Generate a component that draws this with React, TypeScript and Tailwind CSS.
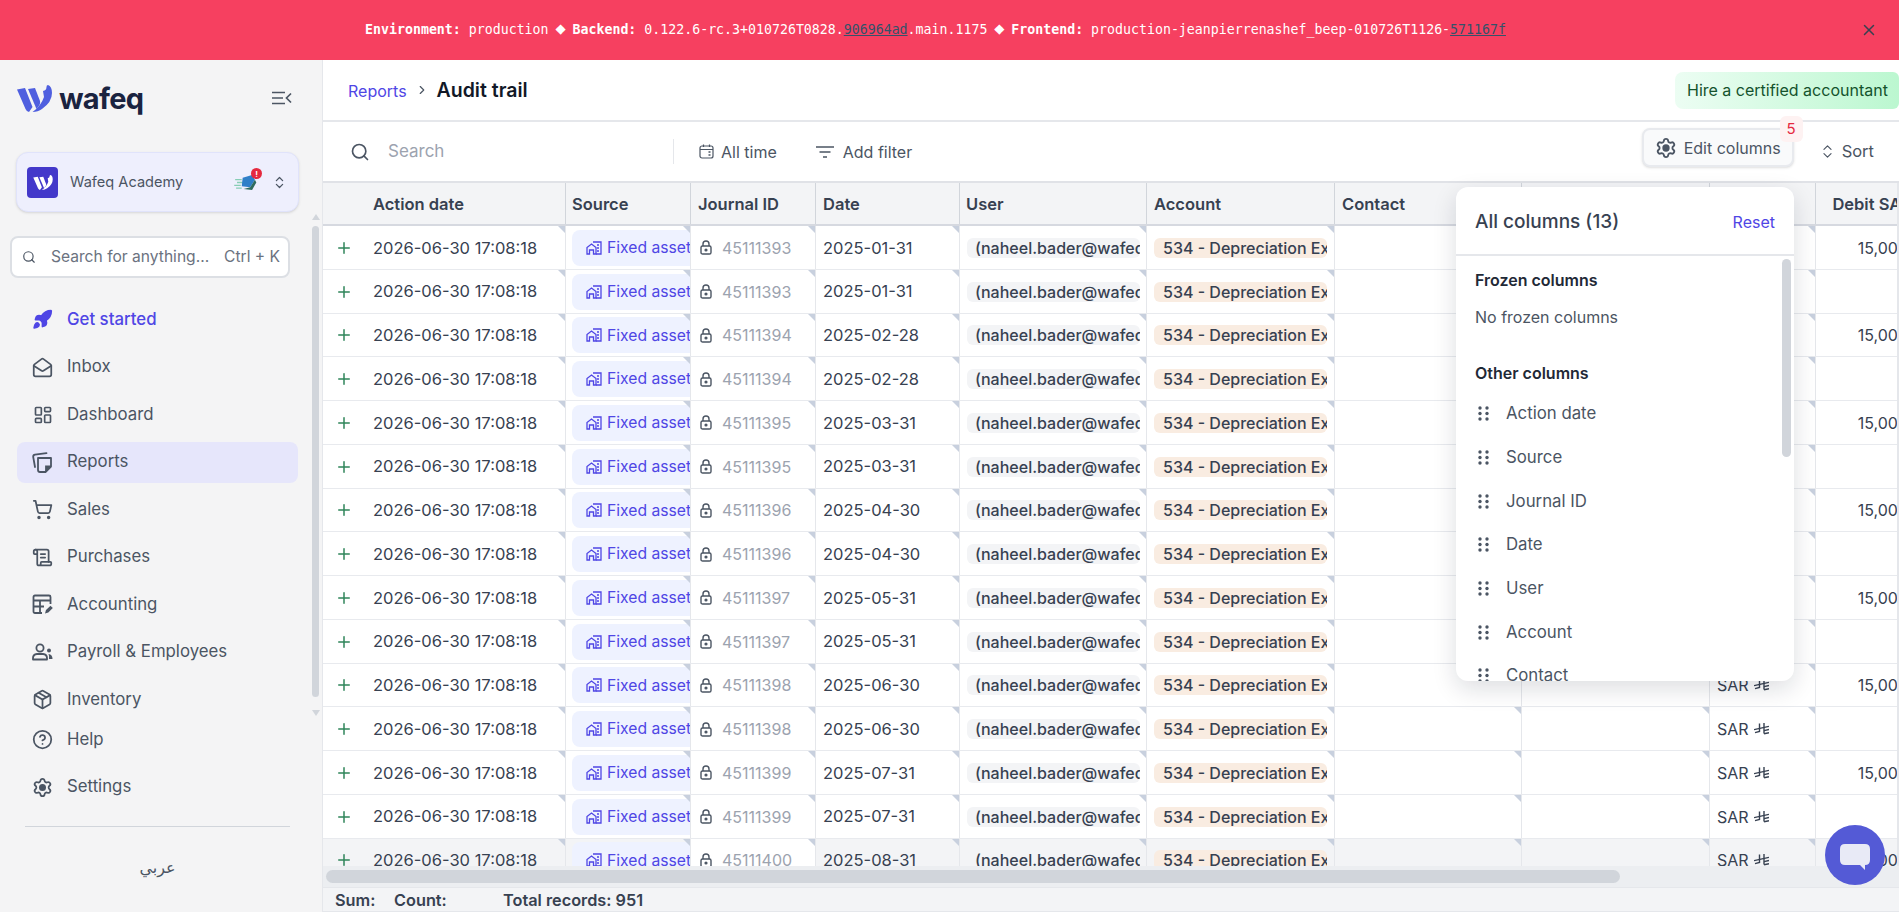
import type { ReactNode } from "react";
import {
  ChevronRight,
  ChevronsUpDown,
  CircleHelp,
  LayoutDashboard,
  MailOpen,
  Package,
  Plus,
  Rocket,
  ScrollText,
  Search,
  Settings,
  ShoppingCart,
  X,
} from "lucide-react";

// ─── Table data ───────────────────────────────────────────
const ROWS = [
  ["45111393", "2025-01-31", true],
  ["45111393", "2025-01-31", false],
  ["45111394", "2025-02-28", true],
  ["45111394", "2025-02-28", false],
  ["45111395", "2025-03-31", true],
  ["45111395", "2025-03-31", false],
  ["45111396", "2025-04-30", true],
  ["45111396", "2025-04-30", false],
  ["45111397", "2025-05-31", true],
  ["45111397", "2025-05-31", false],
  ["45111398", "2025-06-30", true],
  ["45111398", "2025-06-30", false],
  ["45111399", "2025-07-31", true],
  ["45111399", "2025-07-31", false],
  ["45111400", "2025-08-31", true],
] as const;

const PANEL_COLUMNS = ["Action date", "Source", "Journal ID", "Date", "User", "Account", "Contact"];

// ─── Small drawings ───────────────────────────────────────
function WafeqMark({ className }: { className: string }) {
  return (
    <svg viewBox="0 0 35 27" className={className} fill="currentColor">
      <path d="M0 4.5 L8 3 L15.5 22 L12 27 Q9.5 26.5 8.5 24 Z" />
      <path d="M11 4 L18 3 L23 16 Q23.5 18 22.5 20 L19.5 24 Z" />
      <path d="M26 6 Q29.5 5.5 29.5 2 Q29.5 0 31 0 Q35 1.5 35 8 Q35 17 25 24 Q21 27 15.5 27 Q24 21 27 12 Z" />
    </svg>
  );
}

function RiyalSign() {
  return (
    <svg viewBox="0 0 15 12" className="h-[12px] w-[15px]" fill="none" stroke="currentColor" strokeWidth="1.4">
      <path d="M5.5 0.5 V8.5 L1 9.6" />
      <path d="M10 0 V10.5" />
      <path d="M0 6.6 L15 3.4" />
      <path d="M10 7.6 L15 6.5" />
      <path d="M10 10.8 L15 9.7" />
    </svg>
  );
}

function AssetIcon() {
  return (
    <svg viewBox="0 0 16 14" className="h-[14px] w-[16px] shrink-0" fill="none" stroke="currentColor" strokeWidth="1.3">
      <path d="M1 13 V6.5 L5.5 3 L10 6.5 V13 H7.5 V9 H3.5 V13 Z" />
      <path d="M7 1 H15 V13 H10" />
      <path d="M11 4 H13 M11 7 H13 M11 10 H13" />
    </svg>
  );
}

function LockIcon() {
  return (
    <svg viewBox="0 0 12 15" className="h-[15px] w-[12px] shrink-0 text-[#4b5563]" fill="none" stroke="currentColor" strokeWidth="1.4">
      <rect x="1" y="6" width="10" height="8" rx="1.6" />
      <path d="M3 6 V4 a3 3 0 0 1 6 0 V6" />
      <circle cx="6" cy="10" r="0.9" fill="currentColor" />
    </svg>
  );
}

function ReportsIcon() {
  return (
    <svg viewBox="0 0 21 21" className="h-[21px] w-[21px]" fill="none" stroke="currentColor" strokeWidth="1.8">
      <path d="M6 6 H19 V14.5 L13.5 20 H8 Q6 20 6 18 Z" strokeLinejoin="round" />
      <path d="M19 14.5 H14 V20" fill="currentColor" />
      <path d="M3 15 L1.2 5 Q1 3 3 2.7 L14.5 1.2" strokeLinecap="round" />
    </svg>
  );
}

function AccountingIcon() {
  return (
    <svg viewBox="0 0 21 21" className="h-[21px] w-[21px]" fill="none" stroke="currentColor" strokeWidth="1.8">
      <path d="M10 19 H3 Q1.5 19 1.5 17.5 V3 Q1.5 1.5 3 1.5 H17 Q18.5 1.5 18.5 3 V10" />
      <path d="M1.5 6.5 H18.5 M1.5 12.5 H12 M8 6.5 V18" />
      <path d="M13 19.5 L14 16 L18.5 11.8 L20.8 14 L16.3 18.5 Z" fill="currentColor" stroke="none" />
    </svg>
  );
}

function PayrollIcon() {
  return (
    <svg viewBox="0 0 21 21" className="h-[21px] w-[21px]" fill="none" stroke="currentColor" strokeWidth="1.8">
      <circle cx="8" cy="6" r="3.6" />
      <path d="M1 17.5 V16 Q1 12.5 5 12 H11 Q15 12.5 15 16 V17.5 Z" strokeLinejoin="round" />
      <circle cx="17" cy="8.5" r="2" fill="currentColor" stroke="none" />
      <path d="M16.5 12 Q20.5 12.5 20.5 17 H17 Q17.5 14 16.5 12 Z" fill="currentColor" stroke="none" />
    </svg>
  );
}

function CalendarIcon() {
  return (
    <svg viewBox="0 0 15 15" className="h-[15px] w-[15px]" fill="none" stroke="currentColor" strokeWidth="1.2">
      <rect x="1" y="2" width="13" height="12" rx="2" />
      <path d="M1 5.5 H14 M4.5 0.5 V3 M10.5 0.5 V3" />
      <path d="M9.5 8 H11.5 M9.5 11 H11.5" strokeWidth="1.5" />
    </svg>
  );
}

function GripDots() {
  return (
    <svg viewBox="0 0 11 15" className="h-[15px] w-[11px] text-[#4b5563]" fill="currentColor">
      <circle cx="2" cy="2" r="1.7" />
      <circle cx="9" cy="2" r="1.7" />
      <circle cx="2" cy="7.5" r="1.7" />
      <circle cx="9" cy="7.5" r="1.7" />
      <circle cx="2" cy="13" r="1.7" />
      <circle cx="9" cy="13" r="1.7" />
    </svg>
  );
}

function Corner() {
  return (
    <span className="absolute right-0 top-0 h-0 w-0 border-l-[7px] border-t-[7px] border-l-transparent border-t-[#c8d0de]" />
  );
}

function Diamond() {
  return <span className="inline-flex w-[8px] justify-center text-[17px] leading-none">◆</span>;
}

// ─── Sidebar ──────────────────────────────────────────────
function NavItem({ icon, label, active, tint }: { icon: ReactNode; label: string; active?: boolean; tint?: boolean }) {
  return (
    <div
      className={`mb-[6.5px] ml-[17px] flex h-[41px] w-[281px] items-center gap-[14px] rounded-lg px-[15px] text-[16.8px] ${
        active ? "font-medium text-[#4f46e5]" : "text-[#4b5563]"
      } ${tint ? "bg-[#e6e6fb]" : ""}`}
    >
      <span className="flex w-[21px] shrink-0 justify-center">{icon}</span>
      {label}
    </div>
  );
}

function Sidebar() {
  return (
    <aside className="relative w-[323px] shrink-0 border-r border-[#e5e7eb] bg-[#f4f4f5]">
      <div className="flex h-[76px] items-center pl-[17px] pr-[30px]">
        <WafeqMark className="h-[27px] w-[35px] text-[#4f5fdf]" />
        <span className="ml-[7px] text-[29px] font-bold leading-none tracking-tight text-[#1a2340]">wafeq</span>
        <svg viewBox="0 0 20 14" className="ml-auto h-[14px] w-[20px] text-[#4b5563]" fill="none" stroke="currentColor" strokeWidth="1.7">
          <path d="M0 1.5 H13 M0 7 H11 M0 12.5 H13" />
          <path d="M19 2.5 L14.5 7 L19 11.5" />
        </svg>
      </div>

      <div className="ml-[16px] mt-[16px] flex h-[60px] w-[283px] items-center rounded-xl border border-[#e0e3fb] bg-[#eeeffd] pl-[10px] pr-[11px] shadow-sm">
        <div className="flex h-[31px] w-[31px] items-center justify-center rounded-[4px] bg-[#4338ca]">
          <WafeqMark className="h-[15px] w-[20px] text-white" />
        </div>
        <span className="ml-[12px] pt-px text-[14.6px] text-[#4b5563]">Wafeq Academy</span>
        <div className="relative ml-auto mr-[15px] h-[16px] w-[23px]">
          <svg viewBox="0 0 24 17" className="h-[16px] w-[23px]">
            <path d="M1 6 H8 M3 9 H9 M0 12 H7 M2 15 H8" stroke="#86cdb5" strokeWidth="1.4" />
            <path d="M9 4 L19 1 L22 6 L17 14 L8 13 Z" fill="#2f7fc8" />
            <path d="M17 14 L22 6 L23.5 9 L19 17 L10 16 Z" fill="#2e6b5e" />
          </svg>
          <span className="absolute -right-[5px] -top-[6px] flex h-[11px] w-[11px] items-center justify-center rounded-full bg-[#e5293f] text-[8px] font-bold leading-none text-white">
            !
          </span>
        </div>
        <ChevronsUpDown size={15} className="text-[#4b5563]" />
      </div>

      <div className="ml-[10px] mt-[24px] flex h-[42px] w-[280px] items-center rounded-lg border-2 border-[#dcdfe4] bg-white pl-[10px] pr-[8px] text-[15.6px] text-[#6b7280]">
        <Search size={14} className="text-[#4b5563]" />
        <span className="ml-[15px]">Search for anything...</span>
        <span className="ml-auto">Ctrl + K</span>
      </div>

      <nav className="mt-[21px] h-[420px]">
        <NavItem active label="Get started" icon={<Rocket size={21} fill="currentColor" />} />
        <NavItem label="Inbox" icon={<MailOpen size={21} />} />
        <NavItem label="Dashboard" icon={<LayoutDashboard size={20} />} />
        <NavItem tint label="Reports" icon={<ReportsIcon />} />
        <NavItem label="Sales" icon={<ShoppingCart size={21} />} />
        <NavItem label="Purchases" icon={<ScrollText size={21} />} />
        <NavItem label="Accounting" icon={<AccountingIcon />} />
        <NavItem label="Payroll & Employees" icon={<PayrollIcon />} />
        <NavItem label="Inventory" icon={<Package size={21} />} />
      </nav>
      <NavItem label="Help" icon={<CircleHelp size={21} />} />
      <NavItem label="Settings" icon={<Settings size={21} className="[&>circle]:fill-current" />} />

      <div className="ml-[25px] mt-[18px] h-px w-[265px] bg-[#d1d5db]" />
      <div className="mt-[29px] w-[315px] text-center text-[16px] leading-6 text-[#4b5563] [font-family:'DejaVu_Sans',sans-serif]">
        عربي
      </div>

      {/* scrollbar over the nav */}
      <span className="absolute left-[312px] top-[154px] h-0 w-0 border-x-[4px] border-b-[6px] border-x-transparent border-b-[#d1d5db]" />
      <span className="absolute left-[312px] top-[166px] h-[471px] w-[7px] rounded-full bg-[#d1d5db]" />
      <span className="absolute left-[312px] top-[650px] h-0 w-0 border-x-[4px] border-t-[6px] border-x-transparent border-t-[#d1d5db]" />
    </aside>
  );
}

// ─── Table ────────────────────────────────────────────────
function HeadCell({ className, children }: { className: string; children?: ReactNode }) {
  return (
    <div className={`flex h-full shrink-0 items-center border-r border-[#d1d5db] px-[7px] pt-[2px] ${className}`}>{children}</div>
  );
}

function Cell({ className, children }: { className: string; children?: ReactNode }) {
  return (
    <div className={`relative flex h-full shrink-0 items-center overflow-hidden border-r border-[#e5e7eb] pt-[1px] ${className}`}>
      {children}
      <Corner />
    </div>
  );
}

function Row({ id, date, debit, hovered }: { id: string; date: string; debit: boolean; hovered: boolean }) {
  return (
    <div className={`flex h-[43.75px] border-b border-[#e8eaee] text-[16px] text-[#374151] ${hovered ? "bg-[#f3f4f6]" : "bg-white"}`}>
      <Cell className="w-[243px]">
        <span className="flex w-[50px] justify-start pl-[12px] text-[#2f855a]">
          <Plus size={18} strokeWidth={2} />
        </span>
        <span className="whitespace-nowrap text-[16.5px]">2026-06-30 17:08:18</span>
      </Cell>
      <Cell className="w-[125px] pl-[6px]">
        <span className="flex h-[36px] w-[150px] shrink-0 items-center gap-[5px] rounded-lg bg-[#eef2ff] pl-[14px] text-[15.7px] text-[#4f46e5]">
          <AssetIcon />
          <span className="whitespace-nowrap">Fixed asset</span>
        </span>
      </Cell>
      <Cell className="w-[125px] gap-[10px] bg-white pl-[9px]">
        <LockIcon />
        <span className="text-[#9ca3af]">{id}</span>
      </Cell>
      <Cell className="w-[144px] pl-[7px] text-[16.5px]">{date}</Cell>
      <Cell className="w-[187px] pl-[7px] pr-[6px]">
        <span className="w-full overflow-hidden whitespace-nowrap rounded-md bg-[#f3f4f6] pl-[8px] font-medium leading-5">
          (naheel.bader@wafeq.com)
        </span>
      </Cell>
      <Cell className="w-[188px] px-[7px]">
        <span className="w-full overflow-hidden whitespace-nowrap rounded-md bg-[#f9ece1] pl-[9px] font-medium leading-5">
          534 - Depreciation Expense
        </span>
      </Cell>
      <Cell className="w-[187px]" />
      <Cell className="w-[188px]" />
      <Cell className="w-[106px] gap-[5px] pl-[7px]">
        SAR <RiyalSign />
      </Cell>
      <Cell className="w-[124px] justify-end pr-[7px]">{debit && "15,000.00"}</Cell>
    </div>
  );
}

function ColumnsPanel() {
  return (
    <div className="absolute left-[1133px] top-[4px] flex h-[494px] w-[338px] flex-col overflow-hidden rounded-xl bg-white shadow-[0_8px_24px_rgba(15,23,42,0.14)]">
      <div className="flex h-[69px] shrink-0 items-center justify-between border-b-2 border-[#e5e7eb] px-[19px] pt-[3px]">
        <span className="text-[19px] font-medium text-[#374151]">All columns (13)</span>
        <span className="text-[16px] text-[#4f46e5]">Reset</span>
      </div>
      <div className="relative pl-[19px] text-[16px]">
        <div className="mt-[13px] h-[22px] font-semibold leading-[22px] text-[#1f2937]">Frozen columns</div>
        <div className="mt-[15px] h-[22px] leading-[22px] text-[#4b5563]">No frozen columns</div>
        <div className="mt-[34px] h-[22px] font-semibold leading-[22px] text-[#1f2937]">Other columns</div>
        <div className="mt-[8px]">
          {PANEL_COLUMNS.map((name) => (
            <div key={name} className="flex h-[43.7px] items-center text-[16.8px] text-[#4b5563]">
              <span className="ml-[3px] mr-[17px] flex">
                <GripDots />
              </span>
              {name}
            </div>
          ))}
        </div>
        <span className="absolute right-[3px] top-[3px] h-[198px] w-[9px] rounded-full bg-[#d1d5db]" />
      </div>
    </div>
  );
}

function AuditTable() {
  return (
    <div className="relative min-h-0 flex-1">
      <div className="h-full overflow-hidden border-r-2 border-[#e5e7eb]">
        <div className="flex h-[43px] border-b-2 border-[#d6d9e0] bg-[#f3f4f6] text-[16.5px] font-semibold text-[#374151]">
          <HeadCell className="w-[243px] pl-[50px]">Action date</HeadCell>
          <HeadCell className="w-[125px] pl-[6px]">Source</HeadCell>
          <HeadCell className="w-[125px]">Journal ID</HeadCell>
          <HeadCell className="w-[144px]">Date</HeadCell>
          <HeadCell className="w-[187px] pl-[6px]">User</HeadCell>
          <HeadCell className="w-[188px]">Account</HeadCell>
          <HeadCell className="w-[187px]">Contact</HeadCell>
          <HeadCell className="w-[188px]" />
          <HeadCell className="w-[106px]" />
          <HeadCell className="w-[124px] justify-end gap-[5px] whitespace-nowrap">
            Debit SAR <RiyalSign />
          </HeadCell>
        </div>
        {ROWS.map(([id, date, debit], i) => (
          <Row key={i} id={id} date={date} debit={debit} hovered={i === ROWS.length - 1} />
        ))}
      </div>
      <ColumnsPanel />
    </div>
  );
}

export default function App() {
  return (
    <div className="relative flex h-[912px] w-[1899px] flex-col overflow-hidden bg-white [font-family:Inter,sans-serif]">
      <div className="relative flex h-[60px] shrink-0 items-center justify-center bg-[#f64060] pr-[28px] text-[13.25px] text-white [font-family:'DejaVu_Sans_Mono',monospace]">
        <span className="whitespace-pre">
          <b>Environment:</b> production <Diamond /> <b>Backend:</b> 0.122.6-rc.3+010726T0828.
          <span className="text-[#33526a] underline">906964ad</span>.main.1175 <Diamond /> <b>Frontend:</b>{" "}
          production-jeanpierrenashef_beep-010726T1126-
          <span className="text-[#33526a] underline">571167f</span>
        </span>
        <X size={18} className="absolute right-[21px] top-[21px] text-[#374151]" />
      </div>

      <div className="flex min-h-0 flex-1">
        <Sidebar />
        <main className="flex min-w-0 flex-1 flex-col">
          <header className="flex h-[62px] shrink-0 items-center border-b-2 border-[#e5e7eb] pl-[25px]">
            <span className="pt-[2px] text-[16px] text-[#4f46e5]">Reports</span>
            <ChevronRight size={14} className="mx-[8px] text-[#4b5563]" />
            <span className="pt-[2px] text-[19.5px] font-semibold text-[#111827]">Audit trail</span>
            <span className="ml-auto flex h-[37px] w-[224px] items-center rounded-l-lg rounded-r-md bg-gradient-to-r from-[#ecfdf3] to-[#bbf7d0] pl-[12px] text-[16px] text-[#14532d]">
              Hire a certified accountant
            </span>
          </header>

          <div className="flex h-[61px] shrink-0 items-center border-b-2 border-[#e0e2e7] pl-[27px]">
            <Search size={20} className="text-[#4b5563]" />
            <span className="ml-[18px] w-[285px] pt-px text-[17px] text-[#9ca3af]">Search</span>
            <span className="h-[25px] w-px bg-[#e5e7eb]" />
            <div className="ml-[25px] flex items-center gap-[7px] text-[16px] text-[#4b5563]">
              <CalendarIcon />
              All time
            </div>
            <div className="ml-[39px] flex items-center gap-[9px] text-[16px] text-[#4b5563]">
              <svg viewBox="0 0 18 12" className="h-[12px] w-[18px]" fill="none" stroke="currentColor" strokeWidth="1.6">
                <path d="M0 1 H18 M3.5 6 H14.5 M7 11 H11" />
              </svg>
              Add filter
            </div>
            <div className="relative mb-[8px] ml-auto flex h-[39px] w-[152px] items-center gap-[7px] rounded-lg border-2 border-[#e8eaee] bg-[#f9fafb] pl-[11px] text-[16px] text-[#4b5563] shadow-sm">
              <Settings size={22} className="[&>circle]:fill-current" />
              Edit columns
              <span className="absolute -right-[11px] -top-[14px] flex h-[26px] w-[23px] items-center justify-center rounded-md bg-[#fef2f2] text-[15px] text-[#e5293f]">
                5
              </span>
            </div>
            <div className="ml-[25px] mr-[25px] flex items-center gap-[6px] text-[16.5px] text-[#4b5563]">
              <ChevronsUpDown size={17} strokeWidth={1.6} />
              Sort
            </div>
          </div>

          <AuditTable />

          <div className="flex h-[21px] shrink-0 items-center bg-[#eceef1] pl-[3px]">
            <span className="h-[13px] w-[1294px] rounded-full bg-[#d1d5db]" />
          </div>
          <footer className="flex h-[25px] shrink-0 items-center border-y border-[#e5e7eb] bg-[#f3f4f6] pl-[12px] pt-px text-[16.3px] font-semibold text-[#374151]">
            <span className="w-[59px]">Sum:</span>
            <span className="w-[109px]">Count:</span>
            <span>Total records: 951</span>
          </footer>
        </main>
      </div>

      {/* chat launcher */}
      <div className="absolute left-[1825px] top-[825px] flex h-[60px] w-[60px] items-center justify-center rounded-full bg-[#545ad6]">
        <svg viewBox="0 0 30 26" className="mt-[3px] h-[26px] w-[30px]" fill="#e8eaf6">
          <path d="M5 0 H25 Q30 0 30 5 V16 Q30 21 25 21 H25 V26 L20 21 H5 Q0 21 0 16 V5 Q0 0 5 0 Z" />
        </svg>
      </div>
    </div>
  );
}
